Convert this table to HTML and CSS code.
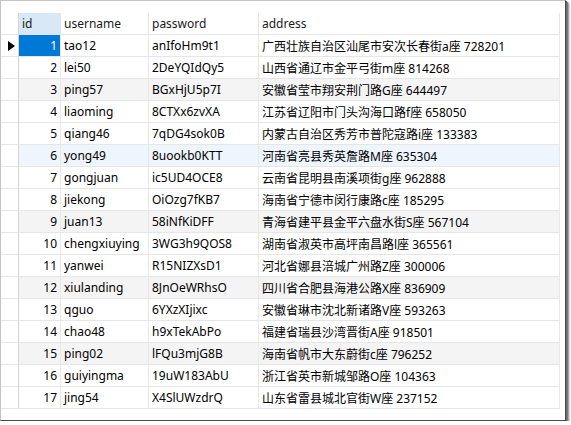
FILE: index.html
```html
<!DOCTYPE html>
<html>
<head>
<meta charset="utf-8">
<link rel="stylesheet" href="styles.css">
</head>
<body>
<div class="window">
  <div class="spacer"></div>
  <div class="grid">
    <div class="row head">
      <div class="rh"></div>
      <div class="c id sorted">id</div>
      <div class="c user">username</div>
      <div class="c pass">password</div>
      <div class="c addr">address</div>
    </div>
    <div class="row"><div class="rh"><span class="tri"></span></div><div class="c id num sel">1</div><div class="c user">tao12</div><div class="c pass">anIfoHm9t1</div><div class="c addr">广西壮族自治区汕尾市安次长春街a座 728201</div></div>
    <div class="row"><div class="rh"></div><div class="c id num">2</div><div class="c user">lei50</div><div class="c pass">2DeYQIdQy5</div><div class="c addr">山西省通辽市金平弓街m座 814268</div></div>
    <div class="row alt"><div class="rh"></div><div class="c id num">3</div><div class="c user">ping57</div><div class="c pass">BGxHjU5p7I</div><div class="c addr">安徽省莹市翔安荆门路G座 644497</div></div>
    <div class="row"><div class="rh"></div><div class="c id num">4</div><div class="c user">liaoming</div><div class="c pass">8CTXx6zvXA</div><div class="c addr">江苏省辽阳市门头沟海口路f座 658050</div></div>
    <div class="row"><div class="rh"></div><div class="c id num">5</div><div class="c user">qiang46</div><div class="c pass">7qDG4sok0B</div><div class="c addr">内蒙古自治区秀芳市普陀寇路i座 133383</div></div>
    <div class="row hover"><div class="rh"></div><div class="c id num">6</div><div class="c user">yong49</div><div class="c pass">8uookb0KTT</div><div class="c addr">河南省亮县秀英詹路M座 635304</div></div>
    <div class="row"><div class="rh"></div><div class="c id num">7</div><div class="c user">gongjuan</div><div class="c pass">ic5UD4OCE8</div><div class="c addr">云南省昆明县南溪项街g座 962888</div></div>
    <div class="row"><div class="rh"></div><div class="c id num">8</div><div class="c user">jiekong</div><div class="c pass">OiOzg7fKB7</div><div class="c addr">海南省宁德市闵行康路c座 185295</div></div>
    <div class="row alt"><div class="rh"></div><div class="c id num">9</div><div class="c user">juan13</div><div class="c pass">58iNfKiDFF</div><div class="c addr">青海省建平县金平六盘水街S座 567104</div></div>
    <div class="row"><div class="rh"></div><div class="c id num">10</div><div class="c user">chengxiuying</div><div class="c pass">3WG3h9QOS8</div><div class="c addr">湖南省淑英市高坪南昌路l座 365561</div></div>
    <div class="row"><div class="rh"></div><div class="c id num">11</div><div class="c user">yanwei</div><div class="c pass">R15NIZXsD1</div><div class="c addr">河北省娜县涪城广州路Z座 300006</div></div>
    <div class="row alt"><div class="rh"></div><div class="c id num">12</div><div class="c user">xiulanding</div><div class="c pass">8JnOeWRhsO</div><div class="c addr">四川省合肥县海港公路X座 836909</div></div>
    <div class="row"><div class="rh"></div><div class="c id num">13</div><div class="c user">qguo</div><div class="c pass">6YXzXIjixc</div><div class="c addr">安徽省琳市沈北新诸路V座 593263</div></div>
    <div class="row"><div class="rh"></div><div class="c id num">14</div><div class="c user">chao48</div><div class="c pass">h9xTekAbPo</div><div class="c addr">福建省瑞县沙湾晋街A座 918501</div></div>
    <div class="row alt"><div class="rh"></div><div class="c id num">15</div><div class="c user">ping02</div><div class="c pass">lFQu3mjG8B</div><div class="c addr">海南省帆市大东蔚街c座 796252</div></div>
    <div class="row"><div class="rh"></div><div class="c id num">16</div><div class="c user">guiyingma</div><div class="c pass">19uW183AbU</div><div class="c addr">浙江省英市新城邹路O座 104363</div></div>
    <div class="row"><div class="rh"></div><div class="c id num">17</div><div class="c user">jing54</div><div class="c pass">X4SlUWzdrQ</div><div class="c addr">山东省雷县城北官街W座 237152</div></div>
  </div>
</div>
</body>
</html>
```

FILE: styles.css
```css
html, body {
  margin: 0;
  padding: 0;
  background: #ffffff;
}
body {
  font-family: "Noto Sans", "Noto Sans CJK SC", sans-serif;
  font-size: 12px;
  color: #000;
}
.window {
  box-sizing: border-box;
  width: 566px;
  height: 421px;
  background: #fff;
  border: 1px solid #c4c4c4;
  border-right-color: #4a4a4a;
  border-bottom-color: #4a4a4a;
  box-shadow: 1px 1px 0 #6a6a6a, 2px 2px 1px #7a7a7a, 3px 3px 2px rgba(0,0,0,0.45);
}
.spacer {
  height: 12px;
}
.grid {
  display: flex;
  flex-direction: column;
}
.row {
  display: flex;
  height: 22px;
}
.row.alt .c {
  background: #f4f4f4;
}
.row.hover .c {
  background: #eff5fc;
}
.rh {
  box-sizing: border-box;
  width: 18px;
  height: 22px;
  border-right: 1px solid #d4d4d4;
  border-bottom: 1px solid #e6e6e6;
  display: flex;
  align-items: center;
  padding-left: 7px;
}
.tri {
  width: 0;
  height: 0;
  border-left: 7px solid #000;
  border-top: 5px solid transparent;
  border-bottom: 5px solid transparent;
}
.c {
  box-sizing: border-box;
  height: 22px;
  border-right: 1px solid #e8e8e8;
  border-bottom: 1px solid #e6e6e6;
  padding: 0 3px;
  display: flex;
  align-items: center;
  white-space: nowrap;
  overflow: hidden;
}
.head .c {
  border-right-color: #e4e4e4;
  color: #1a1a1a;
}
.head .c.sorted {
  background: #d9e8f6;
}
.id { width: 42px; }
.user { width: 88px; }
.pass { width: 110px; }
.addr { width: 301px; }
.num {
  justify-content: flex-end;
}
.row .c.sel {
  background: #0078d7;
  color: #fff;
}
```
